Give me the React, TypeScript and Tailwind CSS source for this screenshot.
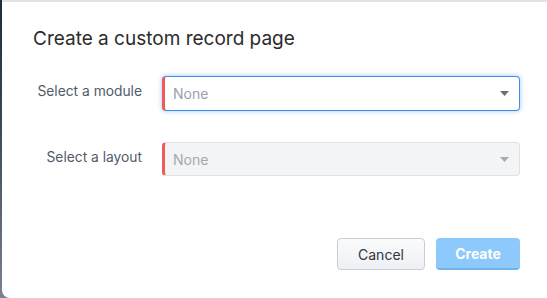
import React from "react";

function Caret({ color }: { color: string }) {
  return (
    <svg width="9" height="5" viewBox="0 0 9 5">
      <path d="M0 0 L9 0 L4.5 5 Z" fill={color} />
    </svg>
  );
}

export default function App() {
  return (
    <div className="w-[547px] h-[298px] bg-[#7b8190] flex" style={{ fontFamily: "Inter, 'Noto Sans', sans-serif" }}>
      <div className="w-[2px] h-full bg-[linear-gradient(#1f2b3d,#39465a_40%,#7b8190)]" />
      <div className="flex-1 h-full bg-white rounded-bl-[8px] border-t-2 border-[#e3e3e3] flex flex-col">
        <h1 className="text-[19px] text-[#2b2b2b] mt-[25px] ml-[31px] leading-[24px]">Create a custom record page</h1>
        <div className="mt-[25px] flex items-center">
          <div className="w-[140px] text-right text-[13.8px] text-[#525a6a] pb-[4px]">Select a module</div>
          <div className="ml-[20px] w-[358px] h-[35px] rounded-[4px] border border-[#3b8fe8] border-l-[3px] border-l-[#f05a5a] shadow-[0_0_4px_1px_rgba(59,143,232,0.35)] bg-white flex items-center pl-[8px] pr-[10px]">
            <span className="flex-1 text-[14px] text-[#9aa0aa]">None</span>
            <Caret color="#6b6f78" />
          </div>
        </div>
        <div className="mt-[31px] flex items-center">
          <div className="w-[140px] text-right text-[13.8px] text-[#525a6a] pb-[4px]">Select a layout</div>
          <div className="ml-[20px] w-[358px] h-[34px] rounded-[4px] border border-[#dfe1e5] border-l-[3px] border-l-[#f05a5a] bg-[#f3f4f6] flex items-center pl-[8px] pr-[10px]">
            <span className="flex-1 text-[14px] text-[#a3a8b0]">None</span>
            <Caret color="#a8abb2" />
          </div>
        </div>
        <div className="mt-[62px] flex justify-end pr-[27px] gap-[11px]">
          <button className="w-[88px] h-[32px] rounded-[4px] border border-[#c9ccd3] bg-[linear-gradient(#fbfbfc,#eef0f4)] text-[14px] text-[#2f3440]">Cancel</button>
          <button className="w-[84px] h-[32px] rounded-[4px] bg-[#8ec9fb] border-b-2 border-[#6fb3ee] text-[14px] text-white font-bold">Create</button>
        </div>
      </div>
    </div>
  );
}
